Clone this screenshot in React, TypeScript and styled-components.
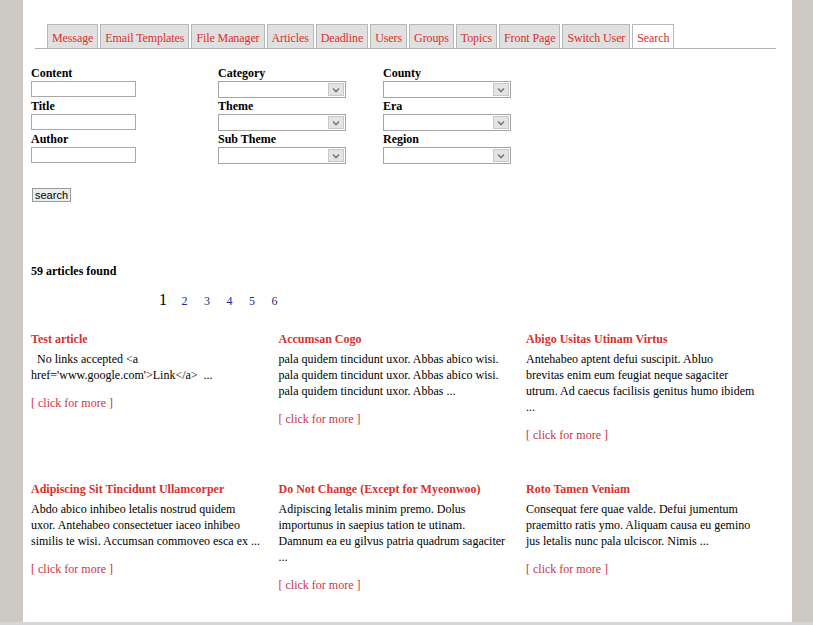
import React from 'react';
import styled, { createGlobalStyle } from 'styled-components';

const GlobalStyle = createGlobalStyle`
  html, body {
    margin: 0;
    padding: 0;
    background-color: #cdc9c5;
  }
  body {
    font-family: "Liberation Serif", "Times New Roman", serif;
    font-size: 12px;
  }
`;

const Frame = styled.div`
  height: 622px;
  border-bottom: 3px solid #d6d6d6;
  overflow: hidden;
`;

const Page = styled.div`
  width: 769px;
  height: 622px;
  margin-left: 23px;
  background-color: #ffffff;
  color: #000;
`;

const TabBar = styled.ul`
  display: flex;
  gap: 2px;
  list-style: none;
  margin: 0 16px 0 12px;
  padding: 24px 0 0 12px;
  border-bottom: 1px solid #b0b0b0;
`;

const Tab = styled.li<{ $active?: boolean }>`
  box-sizing: border-box;
  height: 24px;
  line-height: 24px;
  padding: 1px 4px 0;
  border: 1px solid #b8b8b8;
  border-bottom: none;
  background-color: ${props => (props.$active ? '#ffffff' : '#e0e0e0')};
  color: #d9302c;
  font-size: 12px;
  letter-spacing: -0.1px;
  white-space: nowrap;
`;

const SearchForm = styled.form`
  display: grid;
  grid-template-columns: 187px 165px 1fr;
  margin: 16px 0 0 8px;
`;

const Field = styled.div`
  display: flex;
  flex-direction: column;
  align-items: flex-start;
  height: 33px;
`;

const Label = styled.label`
  font-weight: bold;
  font-size: 12px;
  line-height: 16px;
`;

const TextInput = styled.input`
  box-sizing: border-box;
  width: 105px;
  height: 16px;
  margin: 0;
  padding: 0 2px;
  border: 1px solid #a9a9a9;
  font-size: 11px;
`;

const SelectBox = styled.div`
  box-sizing: border-box;
  display: flex;
  align-items: center;
  width: 128px;
  height: 17px;
  border: 1px solid #a5a5a5;
  background-color: #fff;
`;

const SelectField = styled.select`
  flex: 1;
  min-width: 0;
  height: 100%;
  border: none;
  background: transparent;
  appearance: none;
  padding: 0;
  outline: none;
`;

const ArrowButton = styled.span`
  box-sizing: border-box;
  width: 16px;
  height: 13px;
  margin-right: 1px;
  display: flex;
  align-items: center;
  justify-content: center;
  background-color: #e4e4e4;
  border: 1px solid #c8c8c8;
`;

const ButtonRow = styled.div`
  margin: 24px 0 0 9px;
`;

const SearchButton = styled.button`
  height: 14px;
  padding: 0 2px;
  margin: 0;
  font-family: "Liberation Sans", Arial, sans-serif;
  font-size: 11px;
  line-height: 12px;
  background-color: #ededed;
  border: 1px solid #9a9a9a;
  color: #000;
`;

const FoundText = styled.div`
  margin: 60px 0 0 8px;
  font-weight: bold;
  font-size: 12px;
  line-height: 16px;
`;

const Pager = styled.div`
  display: flex;
  align-items: baseline;
  margin-top: 12px;
  padding-left: 136px;
  height: 20px;
`;

const PageLink = styled.span<{ $current?: boolean }>`
  width: 22.5px;
  font-size: ${props => (props.$current ? '16px' : '12px')};
  color: ${props => (props.$current ? '#000' : '#1a2a8c')};
`;

const ArticleGrid = styled.div`
  display: grid;
  grid-template-columns: repeat(3, 228px);
  column-gap: 19.5px;
  row-gap: 38px;
  margin: 20px 0 0 8px;
`;

const Article = styled.div`
  font-size: 12px;
  line-height: 16px;
`;

const ArticleTitle = styled.div`
  font-weight: bold;
  color: #d9302c;
  margin-bottom: 4px;
  white-space: nowrap;
`;

const ArticleBody = styled.div`
  margin-bottom: 12px;
`;

const BodyLine = styled.div`
  white-space: pre;
`;

const MoreLink = styled.span`
  color: #cc3344;
`;

const Chevron = () => (
  <svg width="8" height="6" viewBox="0 0 8 6">
    <path d="M1 1.5 L4 4.5 L7 1.5" fill="none" stroke="#7a7a7a" strokeWidth="1.6" />
  </svg>
);

const Dropdown: React.FC = () => (
  <SelectBox>
    <SelectField defaultValue="">
      <option value=""></option>
    </SelectField>
    <ArrowButton>
      <Chevron />
    </ArrowButton>
  </SelectBox>
);

const tabs = [
  'Message',
  'Email Templates',
  'File Manager',
  'Articles',
  'Deadline',
  'Users',
  'Groups',
  'Topics',
  'Front Page',
  'Switch User',
  'Search',
];

const articles = [
  {
    title: 'Test article',
    lines: ['  No links accepted <a', "href='www.google.com'>Link</a>  ..."],
  },
  {
    title: 'Accumsan Cogo',
    lines: [
      'pala quidem tincidunt uxor. Abbas abico wisi.',
      'pala quidem tincidunt uxor. Abbas abico wisi.',
      'pala quidem tincidunt uxor. Abbas ...',
    ],
  },
  {
    title: 'Abigo Usitas Utinam Virtus',
    lines: [
      'Antehabeo aptent defui suscipit. Abluo',
      'brevitas enim eum feugiat neque sagaciter',
      'utrum. Ad caecus facilisis genitus humo ibidem',
      '...',
    ],
  },
  {
    title: 'Adipiscing Sit Tincidunt Ullamcorper',
    lines: [
      'Abdo abico inhibeo letalis nostrud quidem',
      'uxor. Antehabeo consectetuer iaceo inhibeo',
      'similis te wisi. Accumsan commoveo esca ex ...',
    ],
  },
  {
    title: 'Do Not Change (Except for Myeonwoo)',
    lines: [
      'Adipiscing letalis minim premo. Dolus',
      'importunus in saepius tation te utinam.',
      'Damnum ea eu gilvus patria quadrum sagaciter',
      '...',
    ],
  },
  {
    title: 'Roto Tamen Veniam',
    lines: [
      'Consequat fere quae valde. Defui jumentum',
      'praemitto ratis ymo. Aliquam causa eu gemino',
      'jus letalis nunc pala ulciscor. Nimis ...',
    ],
  },
];

const fields: Array<{ label: string; kind: 'text' | 'select' }> = [
  { label: 'Content', kind: 'text' },
  { label: 'Category', kind: 'select' },
  { label: 'County', kind: 'select' },
  { label: 'Title', kind: 'text' },
  { label: 'Theme', kind: 'select' },
  { label: 'Era', kind: 'select' },
  { label: 'Author', kind: 'text' },
  { label: 'Sub Theme', kind: 'select' },
  { label: 'Region', kind: 'select' },
];

const App: React.FC = () => {
  return (
    <>
      <GlobalStyle />
      <Frame>
        <Page>
          <TabBar>
            {tabs.map(t => (
              <Tab key={t} $active={t === 'Search'}>{t}</Tab>
            ))}
          </TabBar>

          <SearchForm onSubmit={e => e.preventDefault()}>
            {fields.map(f => (
              <Field key={f.label}>
                <Label>{f.label}</Label>
                {f.kind === 'text' ? <TextInput type="text" /> : <Dropdown />}
              </Field>
            ))}
          </SearchForm>

          <ButtonRow>
            <SearchButton type="button">search</SearchButton>
          </ButtonRow>

          <FoundText>59 articles found</FoundText>

          <Pager>
            {[1, 2, 3, 4, 5, 6].map(n => (
              <PageLink key={n} $current={n === 1}>{n}</PageLink>
            ))}
          </Pager>

          <ArticleGrid>
            {articles.map(a => (
              <Article key={a.title}>
                <ArticleTitle>{a.title}</ArticleTitle>
                <ArticleBody>
                  {a.lines.map((l, i) => (
                    <BodyLine key={i}>{l}</BodyLine>
                  ))}
                </ArticleBody>
                <MoreLink>[ click for more ]</MoreLink>
              </Article>
            ))}
          </ArticleGrid>
        </Page>
      </Frame>
    </>
  );
};

export default App;
